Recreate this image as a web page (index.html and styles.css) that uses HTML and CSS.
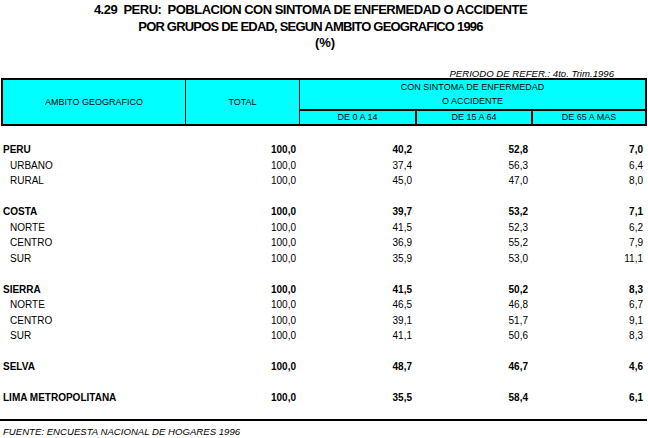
FILE: index.html
```html
<!DOCTYPE html>
<html lang="es">
<head>
<meta charset="utf-8">
<title>4.29 PERU: Poblacion con sintoma de enfermedad o accidente</title>
<link rel="stylesheet" href="styles.css">
</head>
<body>
<div class="page">
  <div class="title">
    <div class="title-lines">
      <div class="title-line line-1">4.29  PERU:  POBLACION CON SINTOMA DE ENFERMEDAD O ACCIDENTE</div>
      <div class="title-line line-2">POR GRUPOS DE EDAD, SEGUN AMBITO GEOGRAFICO 1996</div>
    </div>
    <div class="title-line pct">(%)</div>
  </div>

  <div class="period">PERIODO DE REFER.: 4to. Trim.1996</div>

  <div class="head">
    <div class="h-cell h-ambito">AMBITO GEOGRAFICO</div>
    <div class="h-cell h-total">TOTAL</div>
    <div class="h-group">
      <div class="h-group-title">
        <span>CON SINTOMA DE ENFERMEDAD</span>
        <span>O ACCIDENTE</span>
      </div>
      <div class="h-sub">
        <div class="h-subcell">DE 0 A 14</div>
        <div class="h-subcell">DE 15 A 64</div>
        <div class="h-subcell">DE 65 A MAS</div>
      </div>
    </div>
  </div>

  <div class="data">
    <div class="row total-row"><span class="label">PERU</span><span>100,0</span><span>40,2</span><span>52,8</span><span>7,0</span></div>
    <div class="row"><span class="label sub">URBANO</span><span>100,0</span><span>37,4</span><span>56,3</span><span>6,4</span></div>
    <div class="row"><span class="label sub">RURAL</span><span>100,0</span><span>45,0</span><span>47,0</span><span>8,0</span></div>
    <div class="spacer"></div>
    <div class="row total-row"><span class="label">COSTA</span><span>100,0</span><span>39,7</span><span>53,2</span><span>7,1</span></div>
    <div class="row"><span class="label sub">NORTE</span><span>100,0</span><span>41,5</span><span>52,3</span><span>6,2</span></div>
    <div class="row"><span class="label sub">CENTRO</span><span>100,0</span><span>36,9</span><span>55,2</span><span>7,9</span></div>
    <div class="row"><span class="label sub">SUR</span><span>100,0</span><span>35,9</span><span>53,0</span><span>11,1</span></div>
    <div class="spacer"></div>
    <div class="row total-row"><span class="label">SIERRA</span><span>100,0</span><span>41,5</span><span>50,2</span><span>8,3</span></div>
    <div class="row"><span class="label sub">NORTE</span><span>100,0</span><span>46,5</span><span>46,8</span><span>6,7</span></div>
    <div class="row"><span class="label sub">CENTRO</span><span>100,0</span><span>39,1</span><span>51,7</span><span>9,1</span></div>
    <div class="row"><span class="label sub">SUR</span><span>100,0</span><span>41,1</span><span>50,6</span><span>8,3</span></div>
    <div class="spacer"></div>
    <div class="row total-row"><span class="label">SELVA</span><span>100,0</span><span>48,7</span><span>46,7</span><span>4,6</span></div>
    <div class="spacer"></div>
    <div class="row total-row"><span class="label">LIMA METROPOLITANA</span><span>100,0</span><span>35,5</span><span>58,4</span><span>6,1</span></div>
  </div>

  <div class="rule"></div>
  <div class="source">FUENTE: ENCUESTA NACIONAL DE HOGARES 1996</div>
</div>
</body>
</html>
```
FILE: styles.css
```css
* {
  box-sizing: border-box;
}

html, body {
  margin: 0;
  padding: 0;
  background: #ffffff;
}

.page {
  width: 648px;
  height: 438px;
  overflow: hidden;
  font-family: "Liberation Sans", Arial, sans-serif;
  color: #000000;
}

/* Title */
.title {
  padding-top: 2px;
  text-align: center;
}

.title-lines {
  padding-right: 27px;
}

.title-line {
  font-family: "Liberation Sans Narrow", "Arial Narrow", "Liberation Sans", sans-serif;
  font-weight: bold;
  font-size: 13px;
  line-height: 16.5px;
  white-space: pre;
}

.line-1 {
  letter-spacing: -0.5px;
}

.line-2 {
  letter-spacing: -0.8px;
}

.pct {
  padding-left: 2px;
}

/* Reference period */
.period {
  margin-top: 18.4px;
  padding-right: 34px;
  text-align: right;
  font-style: italic;
  font-size: 9.6px;
  line-height: 8px;
  white-space: nowrap;
}

/* Header box */
.head {
  display: grid;
  grid-template-columns: 182px 114px 346px;
  width: 646px;
  margin-left: 1px;
  border: 2px solid #000000;
  background: #00ffff;
  font-size: 9px;
}

.h-cell {
  display: flex;
  align-items: center;
  justify-content: center;
  padding-top: 2px;
  line-height: 13px;
}

.h-total {
  border-left: 1px solid #000000;
}

.h-group {
  display: flex;
  flex-direction: column;
  border-left: 1px solid #000000;
}

.h-group-title {
  display: flex;
  flex-direction: column;
  align-items: center;
  height: 31px;
  border-bottom: 2px solid #000000;
  line-height: 14.5px;
}

.h-sub {
  display: grid;
  grid-template-columns: 115px 116px 114px;
  height: 13px;
}

.h-subcell {
  text-align: center;
  line-height: 13px;
}

.h-subcell + .h-subcell {
  border-left: 2px solid #000000;
}

/* Data rows */
.data {
  width: 642px;
  margin-left: 3px;
  padding-top: 16.25px;
  font-size: 10px;
}

.row {
  display: grid;
  grid-template-columns: 182px 114px 116px 116px 114px;
  height: 15.5px;
  line-height: 15.5px;
  white-space: nowrap;
}

.row span {
  text-align: right;
  padding-right: 3px;
}

.row span:last-child {
  padding-right: 2px;
}

.row .label {
  text-align: left;
  padding-right: 0;
}

.row .label.sub {
  padding-left: 7px;
}

.total-row {
  font-weight: bold;
}

.spacer {
  height: 15.5px;
}

/* Footer */
.rule {
  width: 647px;
  height: 2px;
  margin-top: 13.25px;
  background: #000000;
}

.source {
  margin-top: 6px;
  padding-left: 3px;
  font-style: italic;
  font-size: 9.6px;
  line-height: 10px;
  white-space: nowrap;
}
```
